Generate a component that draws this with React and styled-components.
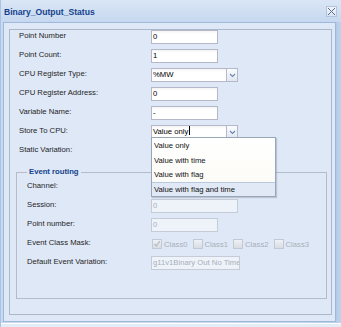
import React from 'react';
import styled, { createGlobalStyle } from 'styled-components';

// Styles

const GlobalStyle = createGlobalStyle`
  html, body {
    margin: 0;
    padding: 0;
  }
  body {
    font-family: "Liberation Sans", Arial, sans-serif;
    background: #ffffff;
  }
`;

const Window = styled.div`
  width: 341px;
  height: 327px;
  display: flex;
  flex-direction: column;
  background: linear-gradient(90deg, #c9daf0, #cddcf1 50%, #bcd1ec);
  border-left: 1px solid #a9c2e6;
  box-sizing: border-box;
  overflow: hidden;
`;

const TitleBar = styled.div`
  height: 22px;
  flex: none;
  display: flex;
  align-items: center;
  justify-content: space-between;
  padding: 0 4px 0 3px;
  background: linear-gradient(#dae6f5, #c6d8f0);
`;

const Title = styled.span`
  font-size: 8.6px;
  font-weight: 700;
  color: #15428b;
  line-height: 12px;
  margin-top: 1px;
`;

const CloseTool = styled.button`
  width: 11px;
  height: 11px;
  padding: 0;
  display: flex;
  align-items: center;
  justify-content: center;
  border: 1px solid #b3c5de;
  background: linear-gradient(#f1f5fb, #d9e4f2);
  margin-top: 1px;
`;

const Body = styled.div`
  height: 300px;
  flex: none;
  display: flex;
  flex-direction: column;
  margin: 0 5px 0 2px;
  border: 1px solid #9fb8da;
  background: #dfe8f6;
  box-sizing: border-box;
  box-shadow: 2px 0 0 #b4cbea;
`;

const Panel = styled.div`
  flex: 1;
  display: flex;
  flex-direction: column;
  margin: 6px 3px 6px 5px;
  padding-left: 9px;
  border: 1px solid #a9b8cb;
  box-sizing: border-box;
`;

const Footer = styled.div`
  flex: 1;
  margin-top: 1px;
  border-top: 1px solid #ffffff;
  background: #e4ecf8;
`;

const Row = styled.div`
  display: grid;
  grid-template-columns: ${({ labelWidth }) => labelWidth}px auto;
  height: 19px;
  align-items: start;
`;

const Label = styled.label`
  font-size: 7.7px;
  line-height: 11px;
  color: #1e1e1e;
  white-space: nowrap;
`;

const FieldWrap = styled.div`
  position: relative;
  display: flex;
`;

const TextBox = styled.div`
  width: ${({ width }) => width}px;
  height: 14px;
  box-sizing: border-box;
  padding-left: 1px;
  border: 1px solid ${({ disabled }) => (disabled ? '#c5ccd8' : '#b5b8c8')};
  background: ${({ disabled }) => (disabled ? '#eef3fa' : 'linear-gradient(#f4f4f4, #ffffff 3px)')};
  color: ${({ disabled }) => (disabled ? '#a9afb8' : '#000000')};
  font-size: 7.7px;
  line-height: 12px;
  white-space: nowrap;
  overflow: hidden;
`;

const Trigger = styled.div`
  width: 11px;
  height: 14px;
  box-sizing: border-box;
  border: 1px solid #b5b8c8;
  border-left: none;
  background: linear-gradient(#fbfcfe, #dfe7f2);
  display: flex;
  align-items: center;
  justify-content: center;
`;

const Caret = styled.span`
  display: inline-block;
  width: 1px;
  height: 9px;
  background: #000;
  vertical-align: -1px;
  margin-left: 1px;
`;

const DropList = styled.ul`
  position: absolute;
  top: 12px;
  left: 0;
  width: 123px;
  margin: 0;
  padding: 0;
  list-style: none;
  border: 1px solid #98a6b8;
  background: linear-gradient(#ffffff, #fbfaf4);
  box-shadow: 1px 1px 1px rgba(80, 90, 110, 0.25);
  z-index: 2;
`;

const DropItem = styled.li`
  height: 14.5px;
  box-sizing: border-box;
  padding-left: 2px;
  font-size: 7.7px;
  line-height: 13px;
  color: #111;
  white-space: nowrap;
  border-top: 1px solid ${({ selected }) => (selected ? '#b8c8de' : 'transparent')};
  background: ${({ selected }) => (selected ? '#e0e9f5' : 'transparent')};
`;

const FieldSet = styled.fieldset`
  margin: 5px 4px 0 -3px;
  padding: 4px 0 23px 10px;
  border: 1px solid #b5bcc8;
  min-width: 0;
`;

const Legend = styled.legend`
  padding: 0 2px;
  font-size: 7.7px;
  font-weight: 700;
  line-height: 8px;
  color: #15428b;
`;

const CheckGroup = styled.div`
  display: flex;
  align-items: center;
  height: 12px;
  margin-top: 1px;
`;

const CheckItem = styled.span`
  display: flex;
  align-items: center;
  margin-right: 4px;
  margin-left: 1px;
  font-size: 7.7px;
  color: #a9afb8;
`;

const CheckBox = styled.span`
  width: 10px;
  height: 10px;
  box-sizing: border-box;
  margin-right: 2px;
  border: 1px solid #c3c9d2;
  background: linear-gradient(#eef1f5, #d9dde3);
  display: flex;
  align-items: center;
  justify-content: center;
`;

// Components

const Chevron = () => (
  <svg width="7" height="5" viewBox="0 0 7 5">
    <path d="M1 1 L3.5 3.5 L6 1" fill="none" stroke="#6d86ad" strokeWidth="1.1" />
  </svg>
);

const Combo = ({ value, children, caret }) => (
  <FieldWrap>
    <TextBox width={76}>
      {value}
      {caret && <Caret />}
    </TextBox>
    <Trigger><Chevron /></Trigger>
    {children}
  </FieldWrap>
);

const Check = ({ label, checked }) => (
  <CheckItem>
    <CheckBox>
      {checked && (
        <svg width="8" height="8" viewBox="0 0 8 8">
          <path d="M1.5 4 L3.3 6 L6.8 1.2" fill="none" stroke="#b4bac3" strokeWidth="1.2" />
        </svg>
      )}
    </CheckBox>
    {label}
  </CheckItem>
);

const storeOptions = ['Value only', 'Value with time', 'Value with flag', 'Value with flag and time'];

const App = () => (
  <>
    <GlobalStyle />
    <Window>
      <TitleBar>
        <Title>Binary_Output_Status</Title>
        <CloseTool aria-label="Close">
          <svg width="9" height="9" viewBox="0 0 9 9">
            <path d="M1 1 L8 8 M8 1 L1 8" stroke="#5b6f8f" strokeWidth="1" />
          </svg>
        </CloseTool>
      </TitleBar>

      <Body>
        <Panel>
          <Row labelWidth={132}>
            <Label>Point Number</Label>
            <TextBox width={67}>0</TextBox>
          </Row>
          <Row labelWidth={132}>
            <Label>Point Count:</Label>
            <TextBox width={67}>1</TextBox>
          </Row>
          <Row labelWidth={132}>
            <Label>CPU Register Type:</Label>
            <Combo value="%MW" />
          </Row>
          <Row labelWidth={132}>
            <Label>CPU Register Address:</Label>
            <TextBox width={67}>0</TextBox>
          </Row>
          <Row labelWidth={132}>
            <Label>Variable Name:</Label>
            <TextBox width={67}>-</TextBox>
          </Row>
          <Row labelWidth={132}>
            <Label>Store To CPU:</Label>
            <Combo value="Value only" caret>
              <DropList>
                {storeOptions.map((opt, i) => (
                  <DropItem key={opt} selected={i === storeOptions.length - 1}>{opt}</DropItem>
                ))}
              </DropList>
            </Combo>
          </Row>
          <Row labelWidth={132}>
            <Label>Static Variation:</Label>
            <Combo value="" />
          </Row>

          <FieldSet>
            <Legend>Event routing</Legend>
            <Row labelWidth={124}>
              <Label>Channel:</Label>
              <Combo value="" />
            </Row>
            <Row labelWidth={124}>
              <Label>Session:</Label>
              <TextBox width={87} disabled>0</TextBox>
            </Row>
            <Row labelWidth={124}>
              <Label>Point number:</Label>
              <TextBox width={67} disabled>0</TextBox>
            </Row>
            <Row labelWidth={124}>
              <Label>Event Class Mask:</Label>
              <CheckGroup>
                <Check label="Class0" checked />
                <Check label="Class1" />
                <Check label="Class2" />
                <Check label="Class3" />
              </CheckGroup>
            </Row>
            <Row labelWidth={124}>
              <Label>Default Event Variation:</Label>
              <TextBox width={89} disabled>g11v1Binary Out No Time</TextBox>
            </Row>
          </FieldSet>
        </Panel>
      </Body>
      <Footer />
    </Window>
  </>
);

export default App;
